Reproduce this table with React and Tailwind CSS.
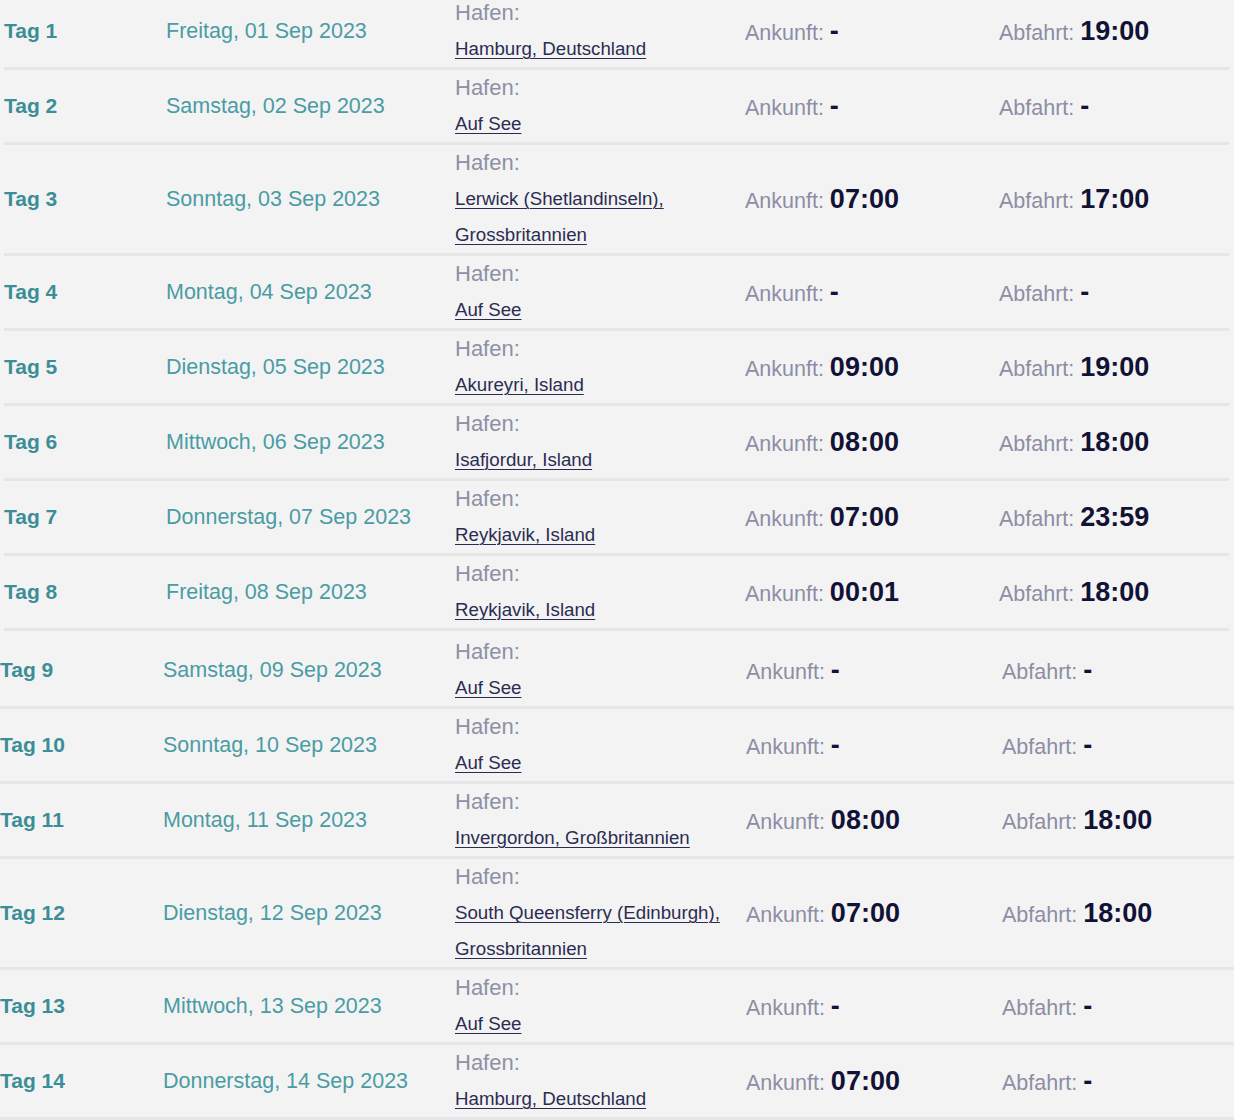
import React from "react";

const rows1 = [
  { tag: "Tag 1", date: "Freitag, 01 Sep 2023", port: ["Hamburg, Deutschland"], an: "-", ab: "19:00" },
  { tag: "Tag 2", date: "Samstag, 02 Sep 2023", port: ["Auf See"], an: "-", ab: "-" },
  { tag: "Tag 3", date: "Sonntag, 03 Sep 2023", port: ["Lerwick (Shetlandinseln),", "Grossbritannien"], an: "07:00", ab: "17:00" },
  { tag: "Tag 4", date: "Montag, 04 Sep 2023", port: ["Auf See"], an: "-", ab: "-" },
  { tag: "Tag 5", date: "Dienstag, 05 Sep 2023", port: ["Akureyri, Island"], an: "09:00", ab: "19:00" },
  { tag: "Tag 6", date: "Mittwoch, 06 Sep 2023", port: ["Isafjordur, Island"], an: "08:00", ab: "18:00" },
  { tag: "Tag 7", date: "Donnerstag, 07 Sep 2023", port: ["Reykjavik, Island"], an: "07:00", ab: "23:59" },
  { tag: "Tag 8", date: "Freitag, 08 Sep 2023", port: ["Reykjavik, Island"], an: "00:01", ab: "18:00" },
];

const rows2 = [
  { tag: "Tag 9", date: "Samstag, 09 Sep 2023", port: ["Auf See"], an: "-", ab: "-" },
  { tag: "Tag 10", date: "Sonntag, 10 Sep 2023", port: ["Auf See"], an: "-", ab: "-" },
  { tag: "Tag 11", date: "Montag, 11 Sep 2023", port: ["Invergordon, Großbritannien"], an: "08:00", ab: "18:00" },
  { tag: "Tag 12", date: "Dienstag, 12 Sep 2023", port: ["South Queensferry (Edinburgh),", "Grossbritannien"], an: "07:00", ab: "18:00" },
  { tag: "Tag 13", date: "Mittwoch, 13 Sep 2023", port: ["Auf See"], an: "-", ab: "-" },
  { tag: "Tag 14", date: "Donnerstag, 14 Sep 2023", port: ["Hamburg, Deutschland"], an: "07:00", ab: "-" },
];

function Row({ r, grid }) {
  return (
    <div className={`grid ${grid} items-center border-b-[3px] border-[#e6e6e6]`}>
      <div className="text-[21px] font-bold text-[#3b8e97] leading-[36px]">{r.tag}</div>
      <div className="text-[21.5px] text-[#4a9ca4] leading-[36px] whitespace-nowrap">{r.date}</div>
      <div className="flex flex-col">
        <div className="h-[36px] text-[22px] text-[#8f8fa6] leading-[36px]">Hafen:</div>
        {r.port.map((p, i) => (
          <div key={i} className="h-[36px] text-[18.7px] leading-[36px] whitespace-nowrap">
            <a className="text-[#2c2c52] underline underline-offset-[3px] decoration-[1px] cursor-pointer">
              {p}
            </a>
          </div>
        ))}
      </div>
      <div className="h-[36px] text-[21.5px] leading-[36px] whitespace-nowrap text-[#8d8da5]">
        Ankunft: <span className="text-[27px] font-bold text-[#121236]">{r.an}</span>
      </div>
      <div className="h-[36px] text-[21.5px] leading-[36px] whitespace-nowrap text-[#8d8da5]">
        Abfahrt: <span className="text-[27px] font-bold text-[#121236]">{r.ab}</span>
      </div>
    </div>
  );
}

export default function App() {
  return (
    <div
      className="w-[1234px] h-[1120px] overflow-hidden bg-[#f3f3f3]"
      style={{ fontFamily: '"Liberation Sans", Arial, Helvetica, sans-serif' }}
    >
      <div className="pl-[4px] pr-[5px] -mt-[5px]">
        {rows1.map((r) => (
          <Row key={r.tag} r={r} grid="grid-cols-[162px_289px_290px_254px_1fr]" />
        ))}
      </div>
      <div className="pt-[3px]">
        {rows2.map((r) => (
          <Row key={r.tag} r={r} grid="grid-cols-[163px_292px_291px_256px_1fr]" />
        ))}
      </div>
    </div>
  );
}
